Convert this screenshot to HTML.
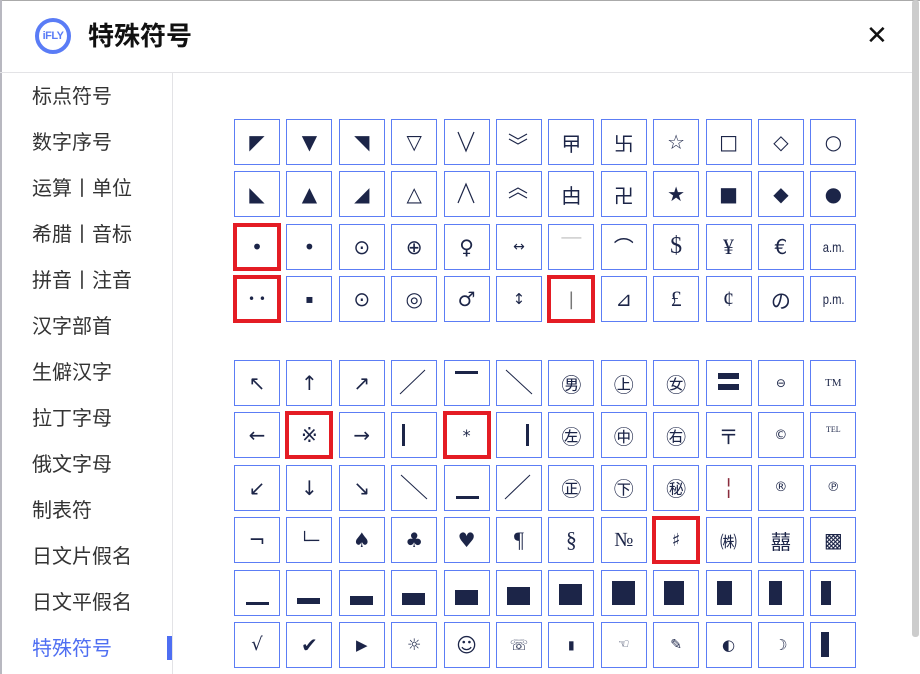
<!DOCTYPE html>
<html><head><meta charset="utf-8"><style>
*{margin:0;padding:0;box-sizing:border-box}
body{width:920px;height:674px;overflow:hidden;background:#fff;position:relative;font-family:"Liberation Sans","Noto Sans CJK SC",sans-serif;color:#1c2548}
.topline{position:absolute;left:0;top:0;width:920px;height:1px;background:#aaa}
.leftline{position:absolute;left:0;top:0;width:2px;height:674px;background:#b8b8c0}
.hdr{position:absolute;left:0;top:72px;width:912px;height:1px;background:#e3e3e6}
.side{position:absolute;left:172px;top:73px;width:1px;height:601px;background:#e3e3e6}
.logo{position:absolute;left:35px;top:18px;width:36px;height:36px;border:4px solid #5a7cf6;border-radius:50%;color:#5a7cf6;font:bold 11px "Liberation Sans",sans-serif;text-align:center;line-height:28px;letter-spacing:-0.5px}
.title{position:absolute;left:88px;top:18px;font:bold 26px "Liberation Sans","Noto Sans CJK SC",sans-serif;color:#111;line-height:36px}
.close{position:absolute;left:866px;top:22px;width:24px;height:28px;font:26px "DejaVu Sans",sans-serif;color:#111;line-height:28px}
.nav{position:absolute;left:32px;font-size:20px;color:#333;line-height:26px}
.nav.act{color:#4e6ef2}
.bar{position:absolute;left:167px;top:636px;width:5px;height:24px;background:#4e6ef2}
.scroll{position:absolute;left:912px;top:0;width:7px;height:637px;background:#ccc;border-radius:3px}
.g{position:absolute;left:234px;display:grid;grid-template-columns:repeat(12,46px);column-gap:6.4px;row-gap:6.4px}
.c{width:46px;height:46px;border:1.5px solid #5c7df5;display:flex;align-items:center;justify-content:center;font-size:20px;font-family:"DejaVu Sans","Noto Sans CJK SC",sans-serif;color:#1c2548;position:relative}
.r{border:4px solid #e41c24;width:48px;height:48px;margin:-1px}
.s{font-size:14px;font-family:"Liberation Sans",sans-serif;transform:scaleX(.8)}
.blk{background:#1c2548;position:absolute}
svg{position:absolute;left:0;top:0}
</style></head><body>
<div class="topline"></div><div class="leftline"></div>
<div class="logo">iFLY</div>
<div class="title">特殊符号</div>
<div class="close">✕</div>
<div class="hdr"></div><div class="side"></div>
<div class="nav" style="top:84px">标点符号</div>
<div class="nav" style="top:130px">数字序号</div>
<div class="nav" style="top:176px">运算丨单位</div>
<div class="nav" style="top:222px">希腊丨音标</div>
<div class="nav" style="top:268px">拼音丨注音</div>
<div class="nav" style="top:314px">汉字部首</div>
<div class="nav" style="top:360px">生僻汉字</div>
<div class="nav" style="top:406px">拉丁字母</div>
<div class="nav" style="top:452px">俄文字母</div>
<div class="nav" style="top:498px">制表符</div>
<div class="nav" style="top:544px">日文片假名</div>
<div class="nav" style="top:590px">日文平假名</div>
<div class="nav act" style="top:636px">特殊符号</div>
<div class="bar"></div>
<div class="scroll"></div>

<div class="g" style="top:119px">
<div class="c">◤</div><div class="c">▼</div><div class="c">◥</div><div class="c">▽</div><div class="c"><svg width="43" height="43"><polyline points="13,12 21,31 29,12" fill="none" stroke="#1c2548" stroke-width="1.2"/></svg></div><div class="c"><svg width="43" height="43"><polyline points="12,14 21,19 30,14" fill="none" stroke="#1c2548" stroke-width="1.2"/><polyline points="12,19 21,24 30,19" fill="none" stroke="#1c2548" stroke-width="1.2"/></svg></div><div class="c">曱</div><div class="c">卐</div><div class="c">☆</div><div class="c">□</div><div class="c">◇</div><div class="c">○</div>
<div class="c">◣</div><div class="c">▲</div><div class="c">◢</div><div class="c">△</div><div class="c"><svg width="43" height="43"><polyline points="13,31 21,12 29,31" fill="none" stroke="#1c2548" stroke-width="1.2"/></svg></div><div class="c"><svg width="43" height="43"><polyline points="12,21 21,16 30,21" fill="none" stroke="#1c2548" stroke-width="1.2"/><polyline points="12,26 21,21 30,26" fill="none" stroke="#1c2548" stroke-width="1.2"/></svg></div><div class="c">甴</div><div class="c">卍</div><div class="c">★</div><div class="c">■</div><div class="c">◆</div><div class="c">●</div>
<div class="c r">•</div><div class="c">•</div><div class="c">⊙</div><div class="c">⊕</div><div class="c">♀</div><div class="c" style="font-size:14px">↔</div><div class="c" style="color:#aaa">￣</div><div class="c">⌒</div><div class="c" style="font-family:'Liberation Serif',serif;font-size:24px">$</div><div class="c" style="font-family:'Liberation Serif',serif;font-size:22px">¥</div><div class="c">€</div><div class="c"><span class="s">a.m.</span></div>
<div class="c r" style="font-size:12px">• •</div><div class="c" style="font-size:12px">▪</div><div class="c">⊙</div><div class="c">◎</div><div class="c">♂</div><div class="c" style="font-size:15px">↕</div><div class="c r" style="color:#777;font-size:18px">|</div><div class="c">⊿</div><div class="c" style="font-family:'Liberation Serif',serif;font-size:22px">£</div><div class="c" style="font-family:'Liberation Serif',serif;font-size:22px">¢</div><div class="c" style="font-family:'Noto Sans CJK JP',sans-serif">の</div><div class="c"><span class="s">p.m.</span></div>
</div>

<div class="g" style="top:360px">
<div class="c">↖</div><div class="c">↑</div><div class="c">↗</div><div class="c"><svg width="43" height="43"><line x1="8" y1="33" x2="33" y2="9" stroke="#1c2548" stroke-width="1"/></svg></div><div class="c"><i class="blk" style="left:10px;top:10px;width:23px;height:3px"></i></div><div class="c"><svg width="43" height="43"><line x1="9" y1="9" x2="35" y2="33" stroke="#1c2548" stroke-width="1"/></svg></div><div class="c" style="font-family:'Noto Sans CJK JP',sans-serif">㊚</div><div class="c" style="font-family:'Noto Sans CJK JP',sans-serif">㊤</div><div class="c" style="font-family:'Noto Sans CJK JP',sans-serif">㊛</div><div class="c"><i class="blk" style="left:11px;top:12px;width:21px;height:6px"></i><i class="blk" style="left:11px;top:23px;width:21px;height:6px"></i></div><div class="c" style="font-size:12px">⊖</div><div class="c" style="font-size:11px;font-family:'Liberation Serif',serif">TM</div>
<div class="c">←</div><div class="c r">※</div><div class="c">→</div><div class="c"><i class="blk" style="left:10px;top:11px;width:3px;height:22px"></i></div><div class="c r" style="font-size:16px">*</div><div class="c"><i class="blk" style="left:29px;top:11px;width:3px;height:22px"></i></div><div class="c" style="font-family:'Noto Sans CJK JP',sans-serif">㊧</div><div class="c" style="font-family:'Noto Sans CJK JP',sans-serif">㊥</div><div class="c" style="font-family:'Noto Sans CJK JP',sans-serif">㊨</div><div class="c">〒</div><div class="c" style="font-size:13px">©</div><div class="c" style="font-size:8px;font-family:'Liberation Serif',serif;align-items:flex-start;padding-top:12px">TEL</div>
<div class="c">↙</div><div class="c">↓</div><div class="c">↘</div><div class="c"><svg width="43" height="43"><line x1="9" y1="9" x2="35" y2="33" stroke="#1c2548" stroke-width="1"/></svg></div><div class="c"><i class="blk" style="left:11px;top:30px;width:23px;height:3px"></i></div><div class="c"><svg width="43" height="43"><line x1="8" y1="33" x2="33" y2="9" stroke="#1c2548" stroke-width="1"/></svg></div><div class="c" style="font-family:'Noto Sans CJK JP',sans-serif">㊣</div><div class="c" style="font-family:'Noto Sans CJK JP',sans-serif">㊦</div><div class="c" style="font-family:'Noto Sans CJK JP',sans-serif">㊙</div><div class="c" style="color:#8a2c3c">╎</div><div class="c" style="font-size:13px">®</div><div class="c" style="font-size:13px">℗</div>
<div class="c">¬</div><div class="c" style="font-size:16px">└─</div><div class="c">♠</div><div class="c">♣</div><div class="c">♥</div><div class="c" style="font-family:'Liberation Serif',serif;font-size:22px">¶</div><div class="c" style="font-family:'Liberation Serif',serif;font-size:22px">§</div><div class="c" style="font-family:'Liberation Serif',serif">№</div><div class="c r" style="font-size:18px">♯</div><div class="c" style="font-family:'Noto Sans CJK JP',sans-serif;font-size:17px">㈱</div><div class="c" style="font-family:'Noto Sans CJK SC',sans-serif">囍</div><div class="c">▩</div>
<div class="c"><i class="blk" style="left:11px;top:31px;width:23px;height:3px"></i></div><div class="c"><i class="blk" style="left:10px;top:27px;width:23px;height:6px"></i></div><div class="c"><i class="blk" style="left:10px;top:25px;width:23px;height:9px"></i></div><div class="c"><i class="blk" style="left:10px;top:22px;width:23px;height:12px"></i></div><div class="c"><i class="blk" style="left:10px;top:19px;width:23px;height:15px"></i></div><div class="c"><i class="blk" style="left:10px;top:16px;width:23px;height:18px"></i></div><div class="c"><i class="blk" style="left:10px;top:13px;width:23px;height:21px"></i></div><div class="c"><i class="blk" style="left:10px;top:10px;width:23px;height:24px"></i></div><div class="c"><i class="blk" style="left:10px;top:10px;width:20px;height:24px"></i></div><div class="c"><i class="blk" style="left:10px;top:10px;width:15px;height:24px"></i></div><div class="c"><i class="blk" style="left:10px;top:10px;width:13px;height:24px"></i></div><div class="c"><i class="blk" style="left:10px;top:10px;width:10px;height:24px"></i></div>
<div class="c" style="font-size:18px">√</div><div class="c">✔</div><div class="c" style="font-size:15px">▶</div><div class="c" style="font-size:16px">☼</div><div class="c">☺</div><div class="c" style="font-size:15px">☏</div><div class="c" style="font-size:12px">▮</div><div class="c" style="font-size:13px">☜</div><div class="c" style="font-size:14px">✎</div><div class="c" style="font-size:15px">◐</div><div class="c" style="font-size:15px">☽</div><div class="c"><i class="blk" style="left:10px;top:9px;width:8px;height:25px"></i></div>
</div>
</body></html>
